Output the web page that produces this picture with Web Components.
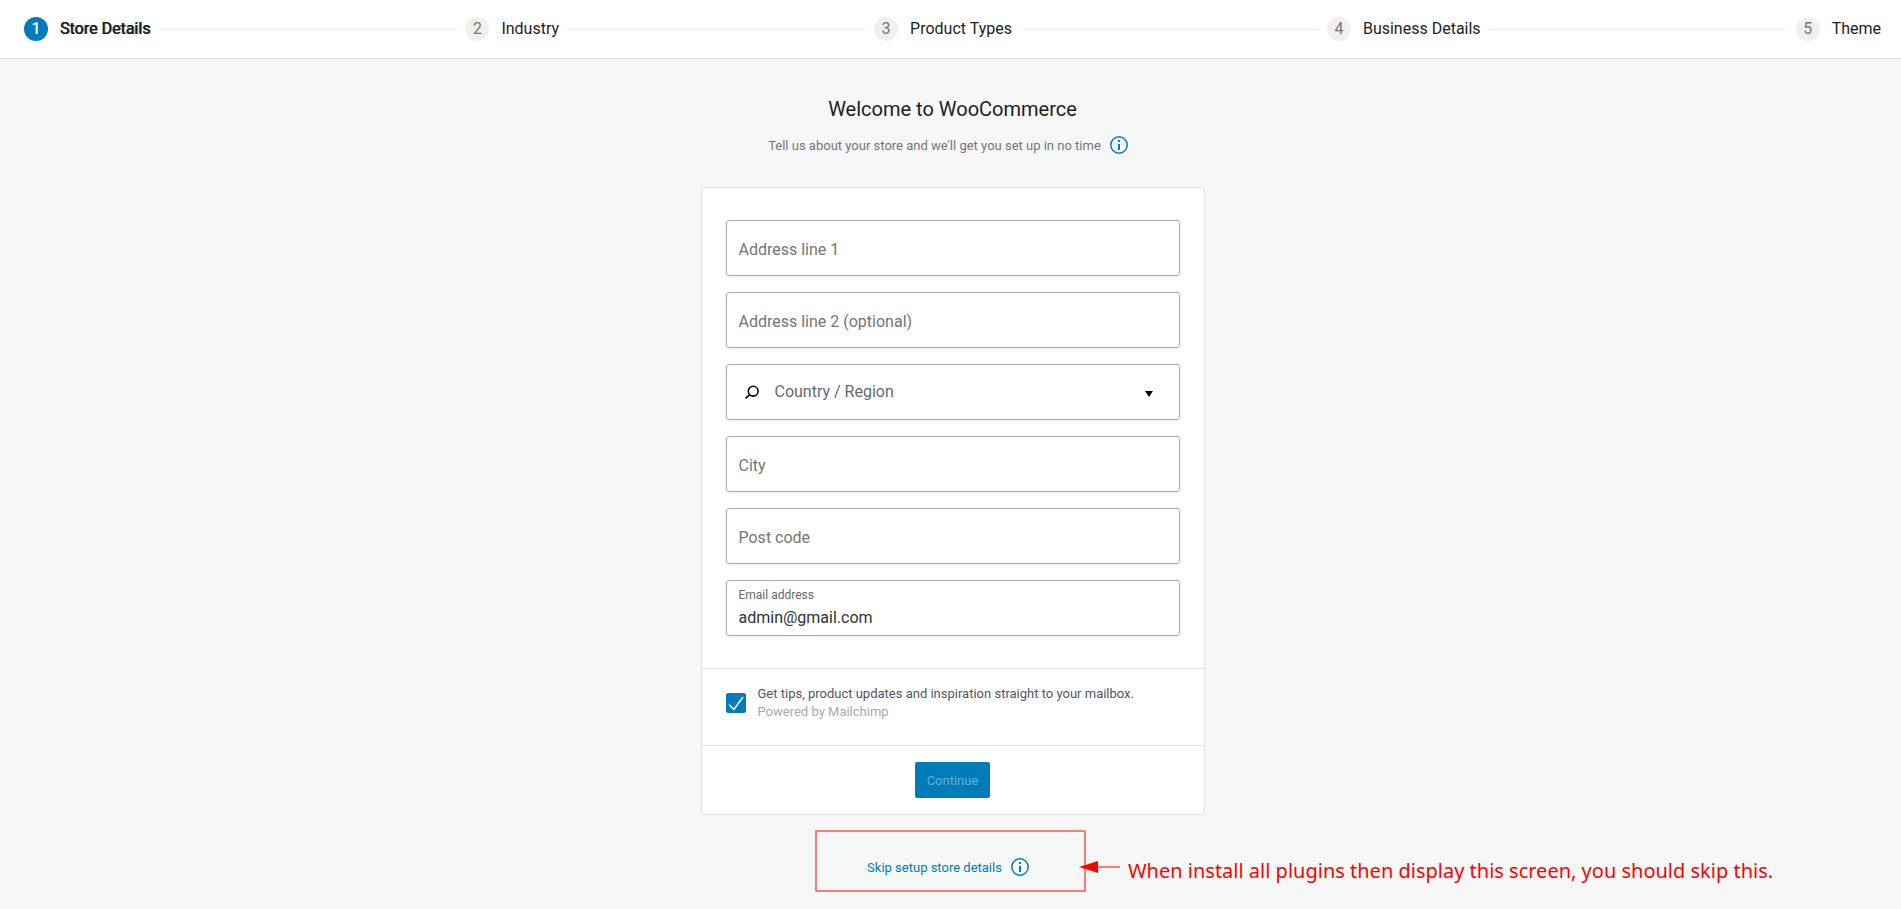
<!DOCTYPE html>
<html lang="en">
<head>
<meta charset="utf-8">
<meta name="viewport" content="width=device-width, initial-scale=1">
<title>Store Details</title>
<style>
  :root {
    --blue: #007cba;
    --ink: #1e1e1e;
    --muted: #757575;
    --line: #e0e2e4;
    --field-border: #a7aaad;
    --note: #ff0000;
    --note-soft: rgba(255, 0, 0, .5);
  }
  body {
    margin: 0;
    background: #f6f7f7;
    color: var(--ink);
    font: 13px/18px Roboto, "Liberation Sans", sans-serif;
  }
</style>
</head>
<body>
<setup-page>
  <step-bar slot="header">
    <step-item number="1" active>Store Details</step-item>
    <step-item number="2">Industry</step-item>
    <step-item number="3">Product Types</step-item>
    <step-item number="4">Business Details</step-item>
    <step-item number="5">Theme</step-item>
  </step-bar>
  <page-intro>
    <span slot="title">Welcome to WooCommerce</span>
    Tell us about your store and we'll get you set up in no time
  </page-intro>
  <setup-card>
    <text-field label="Address line 1"></text-field>
    <text-field label="Address line 2 (optional)"></text-field>
    <country-field label="Country / Region"></country-field>
    <text-field label="City"></text-field>
    <text-field label="Post code"></text-field>
    <text-field label="Email address" type="email" value="admin@gmail.com"></text-field>
    <opt-in slot="consent">
      Get tips, product updates and inspiration straight to your mailbox.
      <span slot="hint">Powered by Mailchimp</span>
    </opt-in>
    <primary-button slot="actions" disabled>Continue</primary-button>
  </setup-card>
  <skip-link slot="footer">
    Skip setup store details
    <arrow-note slot="note">When install all plugins then display this screen, you should skip this.</arrow-note>
  </skip-link>
</setup-page>

<script>
class Base extends HTMLElement {
  connectedCallback() {
    if (this.shadowRoot) return;
    this.attachShadow({ mode: "open" }).innerHTML =
      `<style>*{box-sizing:border-box}${this.css()}</style>${this.html()}`;
  }
}
const attr = (el, name, fallback = "") => el.getAttribute(name) ?? fallback;

customElements.define("setup-page", class extends Base {
  css() { return `
    :host { display: block; }
    main { padding: 36px 20px 0 24px; display: flex; flex-direction: column; align-items: center; }
    footer { display: flex; justify-content: center; padding: 15px 20px 16px; }`; }
  html() { return `<slot name="header"></slot><main><slot></slot></main><footer><slot name="footer"></slot></footer>`; }
});

customElements.define("step-bar", class extends Base {
  css() { return `
    :host { display: block; background: #fff; border-bottom: 1px solid #dcdcde; }
    nav { display: flex; align-items: center; gap: 8px; padding: 17px 20px 17px 24px; }
    hr { flex: 1; margin: 0; border: 0; border-top: 1px solid #f0f0f0; }`; }
  html() {
    const steps = [...this.children];
    steps.forEach((step, i) => step.slot = "step" + i);
    return `<nav aria-label="Setup steps">${steps.map((_, i) => `<slot name="step${i}"></slot>`).join("<hr>")}</nav>`;
  }
});

customElements.define("step-item", class extends Base {
  css() { return `
    :host { display: flex; align-items: center; gap: 12px; font-size: 16px; line-height: 24px; white-space: nowrap; }
    .number { width: 24px; height: 24px; border-radius: 50%; background: #f0f0f0; color: var(--muted); text-align: center; }
    :host([active]) .number { background: var(--blue); color: #fff; font-weight: 500; }
    :host([active]) .label { text-shadow: 0 0 0 var(--ink), 1px 0 0 rgba(30, 30, 30, .5); }`; }
  html() { return `<span class="number">${attr(this, "number")}</span><span class="label"><slot></slot></span>`; }
});

customElements.define("info-icon", class extends Base {
  css() { return `:host { display: block; width: 24px; height: 24px; color: var(--blue); } svg { display: block; }`; }
  html() { return `<svg width="24" height="24" viewBox="0 0 24 24" aria-hidden="true">
    <circle cx="12" cy="12" r="8.2" fill="none" stroke="currentColor" stroke-width="1.5"/>
    <path d="M11 7h2v2h-2zM11 11h2v6h-2z" fill="currentColor"/></svg>`; }
});

customElements.define("page-intro", class extends Base {
  css() { return `
    :host { display: block; text-align: center; margin-bottom: 24px; color: var(--muted); }
    h1 { margin: 0 0 4px; font-size: 20px; line-height: 28px; font-weight: 400; color: var(--ink); }
    .row { display: flex; justify-content: center; align-items: center; }
    p { margin: 0; padding-top: 2px; }
    button { height: 36px; padding: 0 6px; border: 0; background: none; }`; }
  html() { return `<h1><slot name="title"></slot></h1>
    <div class="row"><p><slot></slot></p><button type="button" aria-label="More information"><info-icon></info-icon></button></div>`; }
});

customElements.define("setup-card", class extends Base {
  css() { return `
    :host { display: block; width: 100%; max-width: 504px; border: 1px solid var(--line); border-radius: 3px; background: #fff; box-sizing: border-box; }
    .fields { display: grid; gap: 16px; padding: 32px 24px; }
    .consent { padding: 16px 24px 24px; border-top: 1px solid var(--line); }
    .actions { display: flex; justify-content: center; padding: 16px 24px; border-top: 1px solid var(--line); }`; }
  html() { return `<form><div class="fields"><slot></slot></div>
    <div class="consent"><slot name="consent"></slot></div>
    <div class="actions"><slot name="actions"></slot></div></form>`; }
});

const fieldBox = `
  :host { display: block; }
  .box { display: flex; height: 56px; border: 1px solid var(--field-border); border-radius: 3px; background: #fff;
    box-shadow: 0 2px 4px rgba(0, 0, 0, .06); }`;

customElements.define("text-field", class extends Base {
  css() { return `${fieldBox}
    .box { flex-direction: column; justify-content: center; padding: 0 12px; }
    label { font-size: 12px; line-height: 16px; color: #646970; padding-top: 1px; }
    input { width: 100%; height: 28px; margin: 0; padding: 2px 0 0; border: 0; outline: 0; background: none;
      font: 16px/24px Roboto, "Liberation Sans", sans-serif; color: #2c3338; }
    input::placeholder { color: var(--muted); opacity: 1; }`; }
  html() {
    const label = attr(this, "label"), value = attr(this, "value"), type = attr(this, "type", "text");
    return value
      ? `<div class="box"><label for="f">${label}</label><input id="f" type="${type}" value="${value}"></div>`
      : `<div class="box"><input type="${type}" placeholder="${label}" aria-label="${label}"></div>`;
  }
});

customElements.define("country-field", class extends Base {
  css() { return `${fieldBox}
    .box { align-items: center; padding: 0 24px 0 18px; }
    svg { flex: none; display: block; }
    select { flex: 1; margin: 0 0 0 16px; padding: 0; border: 0; outline: 0; appearance: none; background: none;
      font: 16px/24px Roboto, "Liberation Sans", sans-serif; color: #646970; }`; }
  html() { const label = attr(this, "label"); return `<div class="box">
    <svg width="14" height="14" viewBox="0 0 14 14" aria-hidden="true"><g fill="none" stroke="#000" stroke-width="1.6"><circle cx="8.2" cy="6.2" r="4.9"/><path d="M4.7 9.7L.6 13.4"/></g></svg>
    <select aria-label="${label}"><option>${label}</option></select>
    <svg width="12" height="12" viewBox="0 0 12 12" aria-hidden="true"><path d="M2 5h8l-4 6z" fill="#000"/></svg></div>`; }
});

customElements.define("opt-in", class extends Base {
  css() { return `
    :host { display: block; }
    label { display: flex; align-items: center; gap: 12px; color: #50575e; }
    .check { display: grid; }
    .check > * { grid-area: 1 / 1; width: 20px; height: 20px; margin: 0; }
    input { appearance: none; border-radius: 2px; background: #fff; border: 1px solid var(--blue); }
    input:checked { background: var(--blue); }
    svg { pointer-events: none; }
    small { display: block; font-size: 13px; color: #a7aaad; }`; }
  html() { return `<label><span class="check"><input type="checkbox" checked>
    <svg viewBox="0 0 20 20" aria-hidden="true"><path d="M3 11.7L8 16.4L17 4" fill="none" stroke="#fff" stroke-width="1.5"/></svg></span>
    <span><slot></slot><small><slot name="hint"></slot></small></span></label>`; }
});

customElements.define("primary-button", class extends Base {
  css() { return `
    :host { display: block; }
    button { height: 36px; padding: 2px 12px 0; border: 0; border-radius: 2px; background: var(--blue); color: #fff; font: inherit; }
    button:disabled { color: rgba(255, 255, 255, .4); }`; }
  html() { return `<button type="submit" ${this.hasAttribute("disabled") ? "disabled" : ""}><slot></slot></button>`; }
});

customElements.define("skip-link", class extends Base {
  css() { return `
    :host { display: block; position: relative; width: 271px; padding: 17px 0 5px 4px; border: 2px solid var(--note-soft); border-radius: 1px; box-sizing: border-box; }
    .row { display: flex; justify-content: center; align-items: center; }
    button { height: 36px; padding: 2px 0 0; border: 0; background: none; font: inherit; color: var(--blue); }
    .info { padding: 0 6px; }
    slot[name=note] { position: absolute; left: 100%; top: 50%; display: block; }`; }
  html() { return `<div class="row"><button type="button"><slot></slot></button>
    <button type="button" class="info" aria-label="More information"><info-icon></info-icon></button></div><slot name="note"></slot>`; }
});

/* Arrow pointing back over the frame's edge, followed by its remark. */
customElements.define("arrow-note", class extends Base {
  css() { return `
    :host { position: absolute; left: -5px; top: 0; display: flex; gap: 8px; white-space: nowrap;
      font: 20px/20px "Noto Sans", "Open Sans", sans-serif; color: var(--note); }
    svg { display: block; flex: none; }`; }
  html() { return `<svg width="41" height="12" viewBox="0 0 41 12" aria-hidden="true"><path d="M19 6h22" stroke="var(--note-soft)" stroke-width="2"/><path d="M0 6L19 0v12z" fill="var(--note)"/></svg><span><slot></slot></span>`; }
});
</script>
</body>
</html>
